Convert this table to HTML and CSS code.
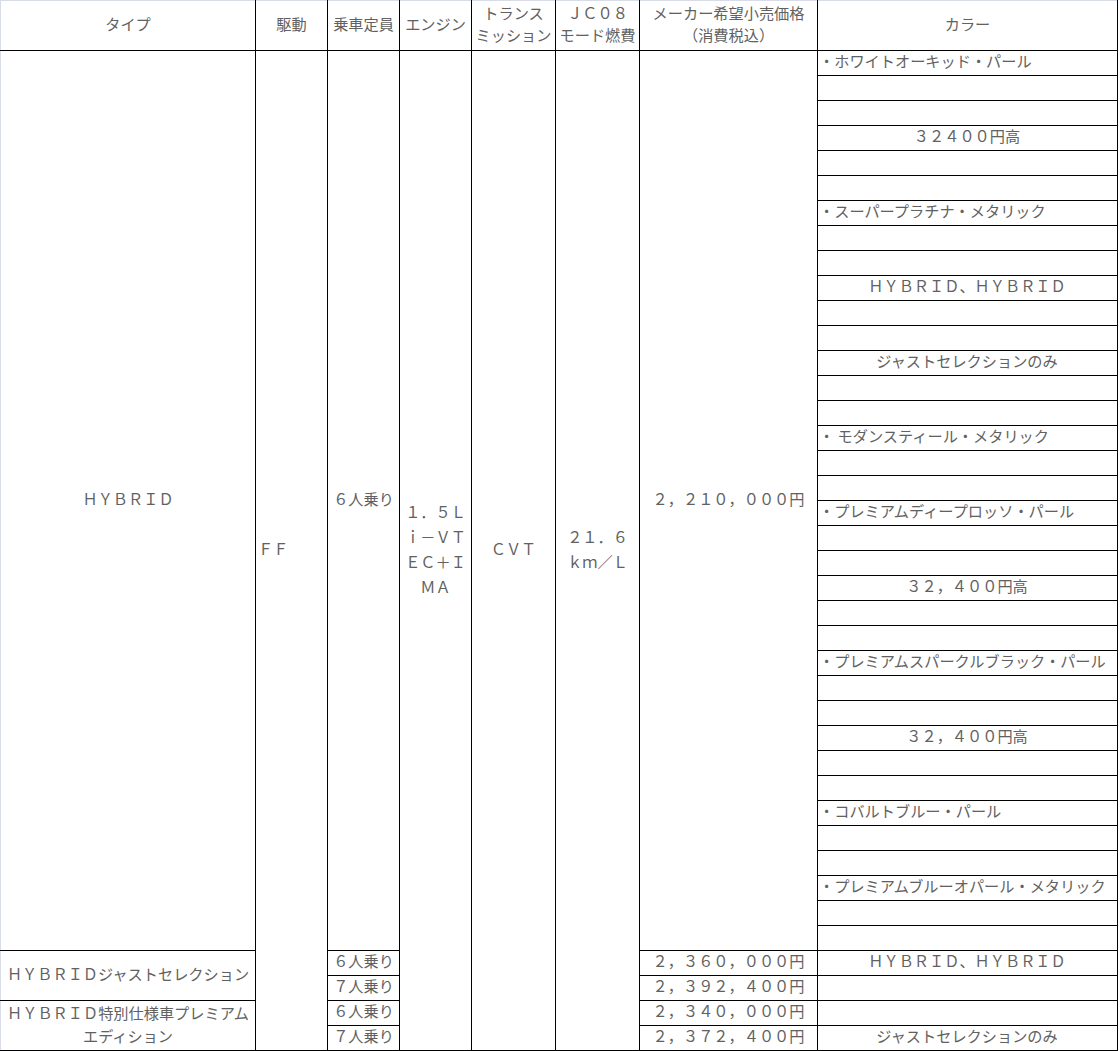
FILE: index.html
```html
<!DOCTYPE html>
<html lang="ja">
<head>
<meta charset="utf-8">
<title>仕様・価格</title>
<link rel="stylesheet" href="styles.css">
</head>
<body>
<table class="spec">
  <colgroup>
    <col class="c-type"><col class="c-drive"><col class="c-cap"><col class="c-engine"><col class="c-trans"><col class="c-fuel"><col class="c-price"><col class="c-color">
  </colgroup>
  <thead>
    <tr>
      <th class="first">タイプ</th>
      <th>駆動</th>
      <th>乗車定員</th>
      <th>エンジン</th>
      <th>トランス<br>ミッション</th>
      <th>ＪＣ０８<br>モード燃費</th>
      <th>メーカー希望小売価格<br>（消費税込）</th>
      <th>カラー</th>
    </tr>
  </thead>
  <tbody>
    <tr>
      <td class="first span" rowspan="36">ＨＹＢＲＩＤ</td>
      <td class="drive span" rowspan="40">ＦＦ</td>
      <td class="span" rowspan="36">６人乗り</td>
      <td class="span multi" rowspan="40">１．５Ｌ<br>ｉ－ＶＴ<br>ＥＣ＋Ｉ<br>ＭＡ</td>
      <td class="span" rowspan="40">ＣＶＴ</td>
      <td class="span multi" rowspan="40">２１．６<br>ｋｍ／Ｌ</td>
      <td class="span" rowspan="36">２，２１０，０００円</td>
      <td class="color">・ホワイトオーキッド・パール</td>
    </tr>
    <tr><td class="color"></td></tr>
    <tr><td class="color"></td></tr>
    <tr><td class="color mid">３２４００円高</td></tr>
    <tr><td class="color"></td></tr>
    <tr><td class="color"></td></tr>
    <tr><td class="color">・スーパープラチナ・メタリック</td></tr>
    <tr><td class="color"></td></tr>
    <tr><td class="color"></td></tr>
    <tr><td class="color mid">ＨＹＢＲＩＤ、ＨＹＢＲＩＤ</td></tr>
    <tr><td class="color"></td></tr>
    <tr><td class="color"></td></tr>
    <tr><td class="color mid">ジャストセレクションのみ</td></tr>
    <tr><td class="color"></td></tr>
    <tr><td class="color"></td></tr>
    <tr><td class="color">・ モダンスティール・メタリック</td></tr>
    <tr><td class="color"></td></tr>
    <tr><td class="color"></td></tr>
    <tr><td class="color">・プレミアムディープロッソ・パール</td></tr>
    <tr><td class="color"></td></tr>
    <tr><td class="color"></td></tr>
    <tr><td class="color mid">３２，４００円高</td></tr>
    <tr><td class="color"></td></tr>
    <tr><td class="color"></td></tr>
    <tr><td class="color">・プレミアムスパークルブラック・パール</td></tr>
    <tr><td class="color"></td></tr>
    <tr><td class="color"></td></tr>
    <tr><td class="color mid">３２，４００円高</td></tr>
    <tr><td class="color"></td></tr>
    <tr><td class="color"></td></tr>
    <tr><td class="color">・コバルトブルー・パール</td></tr>
    <tr><td class="color"></td></tr>
    <tr><td class="color"></td></tr>
    <tr><td class="color">・プレミアムブルーオパール・メタリック</td></tr>
    <tr><td class="color"></td></tr>
    <tr><td class="color"></td></tr>
    <tr>
      <td class="first span" rowspan="2">ＨＹＢＲＩＤジャストセレクション</td>
      <td>６人乗り</td>
      <td>２，３６０，０００円</td>
      <td class="color mid">ＨＹＢＲＩＤ、ＨＹＢＲＩＤ</td>
    </tr>
    <tr>
      <td>７人乗り</td>
      <td>２，３９２，４００円</td>
      <td class="color"></td>
    </tr>
    <tr>
      <td class="first span two" rowspan="2">ＨＹＢＲＩＤ特別仕様車プレミアムエディション</td>
      <td>６人乗り</td>
      <td>２，３４０，０００円</td>
      <td class="color"></td>
    </tr>
    <tr>
      <td>７人乗り</td>
      <td>２，３７２，４００円</td>
      <td class="color mid">ジャストセレクションのみ</td>
    </tr>
  </tbody>
</table>
</body>
</html>
```
FILE: styles.css
```css
html, body {
  margin: 0;
  padding: 0;
  background: #ffffff;
}

body {
  font-family: "Noto Sans CJK JP", "Noto Sans", sans-serif;
  font-size: 15.2px;
  color: #616161;
}

.spec {
  border-collapse: collapse;
  table-layout: fixed;
  width: 1118px;
  border: none;
}

.c-type { width: 255px; }
.c-drive { width: 72px; }
.c-cap { width: 72px; }
.c-engine { width: 72px; }
.c-trans { width: 84px; }
.c-fuel { width: 84px; }
.c-price { width: 178px; }
.c-color { width: 300px; }

.spec th,
.spec td {
  border: 1px solid #000000;
  text-align: center;
  vertical-align: middle;
  white-space: normal;
}

.spec th {
  font-weight: normal;
  height: 44px;
  padding: 0 2px 5px;
  line-height: 22px;
  border-top: 1px solid #d8dce8;
}

.spec td {
  height: 19px;
  padding: 0 2px 5px;
  line-height: 19px;
}

.spec td.span {
  height: auto;
  line-height: 24px;
  padding-bottom: 5px;
}

.spec td.multi {
  line-height: 25px;
  padding-bottom: 4px;
}

.spec td.two {
  line-height: 23px;
  padding-bottom: 3px;
}

.spec .first {
  border-left: 1px solid #d8dce8;
  padding-left: 5px;
  padding-right: 5px;
}

.spec .drive {
  text-align: left;
  padding-left: 2px;
}

.spec .color {
  text-align: left;
  padding-left: 1px;
  white-space: nowrap;
}

.spec .color.mid {
  text-align: center;
}
```
